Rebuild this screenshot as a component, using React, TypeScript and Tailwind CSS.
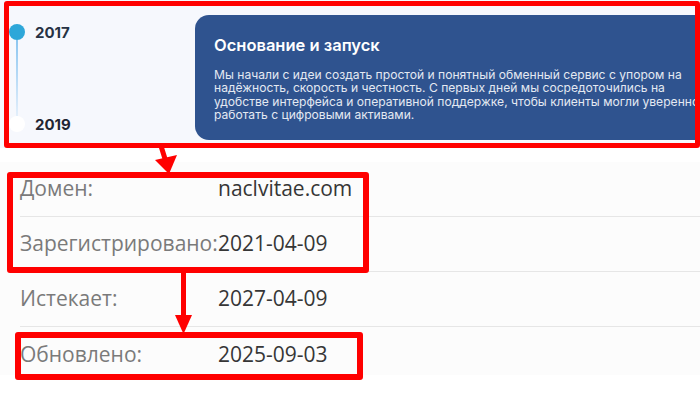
import React from 'react';

const rows = [
  { label: 'Домен:', value: 'naclvitae.com' },
  { label: 'Зарегистрировано:', value: '2021-04-09' },
  { label: 'Истекает:', value: '2027-04-09' },
  { label: 'Обновлено:', value: '2025-09-03' },
];

// Timeline card on top, whois table below, red annotation marks on top of both
export default function App() {
  return (
    <div className="relative w-[700px] h-[393px] overflow-hidden bg-white">
      {/* Timeline section */}
      <div className="flex h-[148px] bg-[#f6f8fd] font-['Inter',sans-serif]">
        <div className="w-[195px] shrink-0 flex flex-col pt-[24px] pl-[9px]">
          <div className="flex items-center gap-[10px]">
            <div className="w-[16px] h-[16px] rounded-full bg-[#2ea7d9]" />
            <span className="text-[15px] font-bold text-[#263244] leading-none">2017</span>
          </div>
          <div className="ml-[7px] w-[2px] h-[76px] bg-gradient-to-b from-[#8cc6f0] to-[#e3effb]" />
          <div className="flex items-center gap-[10px]">
            <div className="w-[16px] h-[16px] rounded-full bg-white" />
            <span className="text-[15px] font-bold text-[#1f2633] leading-none">2019</span>
          </div>
        </div>
        <div className="mt-[15px] h-[125px] flex-1 -mr-[30px] rounded-l-[14px] bg-[#2f538f] pl-[19px] pt-[20px]">
          <h2 className="text-[16.5px] font-semibold text-white leading-[20px]">Основание и запуск</h2>
          <p className="mt-[13px] w-[486px] text-[12.1px] leading-[13.4px] text-[#e4e9f2]">
            Мы начали с идеи создать простой и понятный обменный сервис с упором на надёжность, скорость и честность. С первых дней мы сосредоточились на удобстве интерфейса и оперативной поддержке, чтобы клиенты могли уверенно работать с цифровыми активами.
          </p>
        </div>
      </div>

      {/* Whois table */}
      <div className="mt-[14px] h-[213px] overflow-hidden bg-[#fcfcfc] font-['Open_Sans',sans-serif] text-[21px]">
        {rows.map((r, i) => (
          <div
            key={r.label}
            className={`ml-[20px] h-[55px] flex items-center ${i < rows.length - 1 ? 'border-b border-[#e6e6e6]' : ''}`}
          >
            <span className="w-[198px] shrink-0 whitespace-nowrap text-[#7a7a7a]">{r.label}</span>
            <span className="text-[#363636]">{r.value}</span>
          </div>
        ))}
      </div>

      {/* Annotation boxes */}
      <div className="absolute left-[4px] top-[1px] w-[696px] h-[147px] border-[5px] border-[#ff0000] rounded-[3px]" />
      <div className="absolute left-[7px] top-[172px] w-[362px] h-[101px] border-[6px] border-[#ff0000] rounded-[3px]" />
      <div className="absolute left-[15px] top-[332px] w-[348px] h-[48px] border-[6px] border-[#ff0000] rounded-[3px]" />

      {/* Annotation arrows */}
      <svg className="absolute left-0 top-0" width="700" height="393" viewBox="0 0 700 393">
        <line x1="161" y1="146" x2="166" y2="162" stroke="#ff0000" strokeWidth="5" />
        <polygon points="155,160 177,155 169,174" fill="#ff0000" />
        <line x1="183.5" y1="272" x2="183.5" y2="318" stroke="#ff0000" strokeWidth="5" />
        <polygon points="175,315 192,315 183.5,334" fill="#ff0000" />
      </svg>
    </div>
  );
}
